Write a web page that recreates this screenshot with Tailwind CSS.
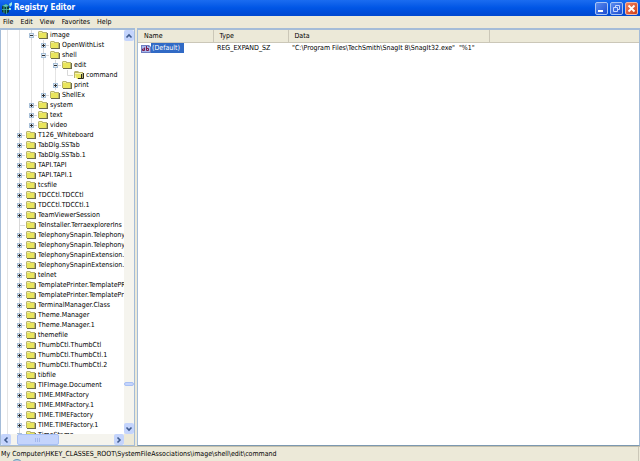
<!DOCTYPE html>
<html lang="en">
<head>
  <meta charset="UTF-8">
  <meta name="viewport" content="width=device-width, initial-scale=1.0">
  <title>Registry Editor</title>
  <script src="https://cdn.jsdelivr.net/npm/@tailwindcss/browser@4"></script>
</head>
<body class="h-screen flex flex-col overflow-hidden bg-[#ece9d8] font-['DejaVu_Sans_Condensed','DejaVu_Sans',sans-serif] text-[7px] leading-[10px] text-black">

  <!-- Icon sprites -->
  <svg class="hidden">
    <symbol id="pipe" viewBox="0 0 12 10"><path d="M6.5 0v10" stroke="#e4e4e4"/></symbol>
    <symbol id="tee" viewBox="0 0 12 10"><path d="M6.5 0v10M6 5.5h6" stroke="#d8d8d8"/></symbol>
    <symbol id="corner" viewBox="0 0 12 10"><path d="M6.5 0v5.5H12" fill="none" stroke="#d8d8d8"/></symbol>
    <symbol id="plus" viewBox="0 0 12 10">
      <path d="M6.5 0v10M6 5.5h6" stroke="#d8d8d8"/>
      <path d="M4 3h5v5H4z" fill="#a8c0d8"/>
      <path d="M5 4h3v3H5z" fill="#e4ecf4"/>
      <path d="M5 5.5h3M6.5 4v3" stroke="#303030"/>
    </symbol>
    <symbol id="minus" viewBox="0 0 12 10">
      <path d="M6.5 0v10M6 5.5h6" stroke="#d8d8d8"/>
      <path d="M4 3h5v5H4z" fill="#a8c0d8"/>
      <path d="M5 4h3v3H5z" fill="#e4ecf4"/>
      <path d="M5 5.5h3" stroke="#303030"/>
    </symbol>
    <symbol id="folder" viewBox="0 0 10 10">
      <path d="M1 3h9v6H1z" fill="#6c6b4a"/>
      <path d="M0 8V2l1-1h3l1 1h4v6z" fill="#b8b46c"/>
      <path d="M1 3h7v5H1z" fill="#e9e55c"/>
      <path d="M1 2h3v1H1z" fill="#f0eea0"/>
    </symbol>
    <symbol id="open" viewBox="0 0 10 10">
      <path d="M0 8V2l1-1h3l1 1h4v6z" fill="#b8b46c"/>
      <path d="M1 3h7v5H1z" fill="#f6f3b0"/>
      <path d="M1 4h5l3 5H3z" fill="#e9e55c"/>
      <path d="M9.500 3v5.500H4M7.500 4v4" fill="none" stroke="#2c2c20"/>
    </symbol>
    <symbol id="chevron" viewBox="0 0 10 10"><path d="M2.500 6.500L5 4l2.500 2.500" fill="none" stroke="#3f5a8c" stroke-width="1.600"/></symbol>
  </svg>

  <!-- Title bar -->
  <header class="flex h-4 shrink-0 items-center bg-linear-to-b from-[#1a6cf0] via-[#0055e5] to-[#0048d0] pl-px pr-0.5 text-white">
    <svg class="size-3 shrink-0" viewBox="0 0 12 12">
      <path d="M1 4l4-2 3 2v6l-3 2-4-2z" fill="#0c3c3a"/>
      <path d="M1 4l4-2 3 2-3 1z" fill="#58c8c0"/>
      <path d="M3 5v6M5.500 5v7M1 7.500h7" stroke="#4eb8a8" stroke-width=".8"/>
      <path d="M8 2l3-2v3L9 5zM8 6h2v2H8z" fill="#9be8e0"/>
    </svg>
    <h1 class="ml-px flex-1 text-[8px] font-bold">Registry Editor</h1>
    <div class="flex gap-0.5">
      <button aria-label="Minimize" class="size-[13px] rounded-xs border border-[#a8c4f4] bg-linear-to-br from-[#5c8cf0] to-[#1c4cd0]">
        <svg class="size-full" viewBox="0 0 11 11"><path d="M2 8h5" stroke="#fff" stroke-width="2"/></svg>
      </button>
      <button aria-label="Restore" class="size-[13px] rounded-xs border border-[#a8c4f4] bg-linear-to-br from-[#5c8cf0] to-[#1c4cd0]">
        <svg class="size-full" viewBox="0 0 11 11"><path d="M4.500 4V2.500h4v4H7M2.500 4.500h4v4h-4z" fill="none" stroke="#c8d8ff"/></svg>
      </button>
      <button aria-label="Close" class="size-[13px] rounded-xs border border-[#f0b8a8] bg-linear-to-br from-[#f08060] to-[#d03c10]">
        <svg class="size-full" viewBox="0 0 11 11"><path d="M2.500 2.500l6 6M8.500 2.500l-6 6" stroke="#fff" stroke-width="1.800"/></svg>
      </button>
    </div>
  </header>

  <!-- Menu -->
  <nav class="flex h-3 shrink-0 items-center gap-[7px] pl-[3px]">
    <button>File</button>
    <button>Edit</button>
    <button>View</button>
    <button>Favorites</button>
    <button>Help</button>
  </nav>

  <main class="flex min-h-0 flex-1">
    <!-- Tree pane -->
    <section class="flex w-[135px] shrink-0 flex-col border border-t-2 border-[#a4bcd8] bg-white">
      <div class="flex min-h-0 flex-1">
        <ul id="tree" class="min-w-0 flex-1 overflow-hidden"></ul>
        <div class="flex w-[10px] shrink-0 flex-col bg-[#f5f4ee]">
          <button aria-label="Scroll up" class="h-[11px] rounded-xs bg-[#c4d4fc]"><svg class="size-[10px]"><use href="#chevron"/></svg></button>
          <div class="flex-1"></div>
          <div class="h-1 rounded-xs border border-[#a8c0f4] bg-[#c4d4fc]"></div>
          <div class="h-[37px]"></div>
          <button aria-label="Scroll down" class="h-[11px] rounded-xs bg-[#c4d4fc]"><svg class="size-[10px] rotate-180"><use href="#chevron"/></svg></button>
        </div>
      </div>
      <div class="flex h-[11px] shrink-0 bg-[#f5f4ee]">
        <button aria-label="Scroll left" class="w-[10px] rounded-xs bg-[#c4d4fc]"><svg class="size-[10px] -rotate-90"><use href="#chevron"/></svg></button>
        <div class="ml-[6px] flex w-[42px] items-center justify-center rounded-xs border border-[#a8c0f4] bg-[#c4d4fc]">
          <svg class="h-1 w-1.5" viewBox="0 0 6 4"><path d="M.5 0v4M2.500 0v4M4.500 0v4" stroke="#a4b8ec"/></svg>
        </div>
        <div class="flex-1"></div>
        <button aria-label="Scroll right" class="w-[10px] rounded-xs bg-[#c4d4fc]"><svg class="size-[10px] rotate-90"><use href="#chevron"/></svg></button>
        <div class="w-[10px] bg-[#ece9d8]"></div>
      </div>
    </section>

    <!-- Values pane -->
    <section class="ml-0.5 min-w-0 flex-1 border border-t-2 border-[#a4bcd8] border-b-[#7c98b0] bg-white">
      <table class="w-full table-fixed text-left">
        <thead class="bg-[#ece9d8]">
          <tr class="h-3">
            <th class="w-[75px] border-b border-r border-[#cbc7b8] pl-[6px] font-normal">Name</th>
            <th class="w-[75px] border-b border-r border-[#cbc7b8] pl-[6px] font-normal">Type</th>
            <th class="w-[201px] border-b border-r border-[#cbc7b8] pl-[6px] font-normal">Data</th>
            <th class="border-b border-[#cbc7b8]"></th>
          </tr>
        </thead>
        <tbody>
          <tr class="h-3 whitespace-nowrap">
            <td class="pl-[3px]">
              <div class="flex items-center">
                <svg class="h-[9px] w-[10px]" viewBox="0 0 10 9">
                  <path d="M0 1h8l2 2v6H0z" fill="#6c7cc0"/>
                  <path d="M1 2h6v1h2v5H1z" fill="#a8b8ec"/>
                  <path d="M3.500 3.500v3h-2v-1.500h2M5.500 2v4.500h2V4.500h-2" fill="none" stroke="#7c1c4c"/>
                </svg>
                <span class="h-[10px] bg-[#316ac5] pl-px pr-1 text-white">(Default)</span>
              </div>
            </td>
            <td class="pl-1">REG_EXPAND_SZ</td>
            <td class="pl-1">"C:\Program Files\TechSmith\SnagIt 8\SnagIt32.exe"&nbsp; "%1"</td>
            <td></td>
          </tr>
        </tbody>
      </table>
    </section>
  </main>

  <!-- Status bar -->
  <footer class="relative flex h-[15px] shrink-0 items-center overflow-hidden border-t border-[#c4c0ac] pl-px">
    <p class="flex-1 whitespace-nowrap">My Computer\HKEY_CLASSES_ROOT\SystemFileAssociations\image\shell\edit\command</p>
    <span class="h-full w-0.5 border-l border-[#cbc7b8]"></span>
    <span class="absolute left-[11px] top-[12px] size-3 rounded-full border border-[#6c94b8] bg-[#b4d0e0]"></span>
  </footer>

  <script>
    // [guide cells, label, icon]
    const rows = [
      ['pipe pipe minus', 'image'],
      ['pipe pipe pipe plus', 'OpenWithList'],
      ['pipe pipe pipe minus', 'shell'],
      ['pipe pipe pipe pipe minus', 'edit'],
      ['pipe pipe pipe pipe pipe corner', 'command', 'open'],
      ['pipe pipe pipe pipe plus', 'print'],
      ['pipe pipe pipe plus', 'ShellEx'],
      ['pipe pipe plus', 'system'],
      ['pipe pipe plus', 'text'],
      ['pipe pipe plus', 'video'],
    ];
    const classes = [
      'T126_Whiteboard', 'TabDlg.SSTab', 'TabDlg.SSTab.1', 'TAPI.TAPI', 'TAPI.TAPI.1', 'tcsfile',
      'TDCCtl.TDCCtl', 'TDCCtl.TDCCtl.1', 'TeamViewerSession', 'TeInstaller.TerraexplorerIns',
      'TelephonySnapin.Telephony', 'TelephonySnapin.Telephony',
      'TelephonySnapinExtension.T', 'TelephonySnapinExtension.T',
      'telnet', 'TemplatePrinter.TemplatePR', 'TemplatePrinter.TemplatePr',
      'TerminalManager.Class', 'Theme.Manager', 'Theme.Manager.1', 'themefile',
      'ThumbCtl.ThumbCtl', 'ThumbCtl.ThumbCtl.1', 'ThumbCtl.ThumbCtl.2', 'tibfile',
      'TIFImage.Document', 'TIME.MMFactory', 'TIME.MMFactory.1', 'TIME.TIMEFactory',
      'TIME.TIMEFactory.1', 'TimeStamp',
    ];
    classes.forEach(name => rows.push([name.startsWith('TeInstaller') ? 'pipe tee' : 'pipe plus', name]));

    document.getElementById('tree').innerHTML = rows.map(([cells, label, icon = 'folder']) => `
      <li class="flex h-[10px] items-center whitespace-nowrap">
        ${cells.split(' ').map(c => `<svg class="h-[10px] w-3 shrink-0"><use href="#${c}"/></svg>`).join('')}
        <svg class="ml-px mr-0.5 size-[10px] shrink-0"><use href="#${icon}"/></svg>
        <span>${label}</span>
      </li>`).join('');
  </script>
</body>
</html>
